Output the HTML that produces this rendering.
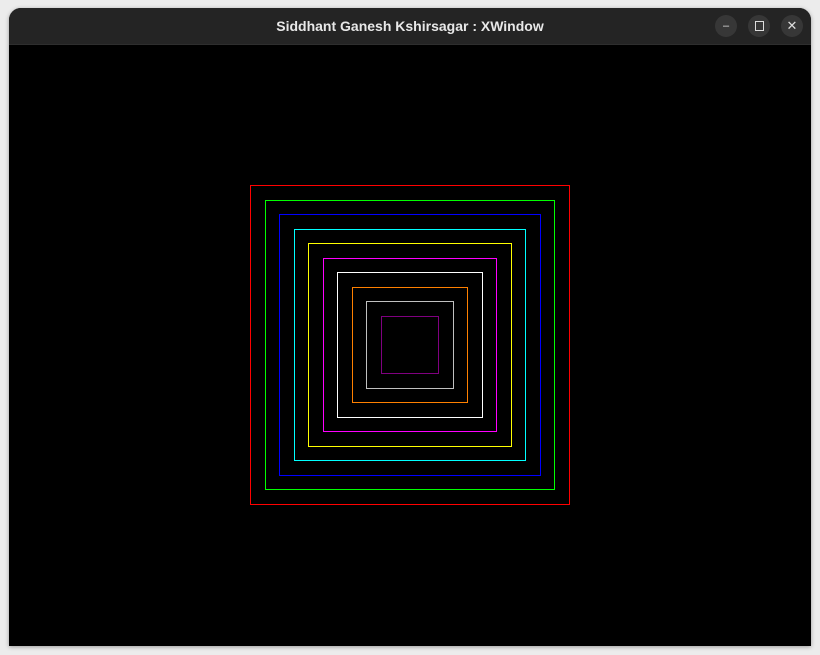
<!DOCTYPE html>
<html><head><style>
body{margin:0;width:820px;height:655px;background:#ececec;overflow:hidden;position:relative;font-family:"Liberation Sans",sans-serif}
.win{position:absolute;left:9px;top:8px;width:802px;height:638px;background:#000;border-radius:12px 12px 0 0;overflow:hidden;box-shadow:0 1px 4px rgba(0,0,0,.35)}
.tb{position:absolute;left:0;top:0;width:802px;height:36px;background:#242424;border-bottom:1px solid #2e2e2e}
.tt{position:absolute;left:0;right:0;top:10px;text-align:center;color:#e8e8e8;font-weight:bold;font-size:14px}
.b{position:absolute;top:7px;width:22px;height:22px;border-radius:11px;background:#373737;color:#ddd;font-size:11px;text-align:center;line-height:22px}
</style></head><body>
<div class="win">
<div class="tb"><div class="tt">Siddhant Ganesh Kshirsagar : XWindow</div>
<div class="b" style="left:706px">&#8211;</div>
<div class="b" style="left:739px"><div style="width:7px;height:8px;border:1px solid #ddd;margin:6px auto 0"></div></div>
<div class="b" style="left:772px;font-size:13px">✕</div>
</div>
</div>
<svg width="820" height="655" style="position:absolute;left:0;top:0" shape-rendering="crispEdges" fill="none">
<rect x="250.5" y="185.5" width="319" height="319" stroke="#ff0000"/>
<rect x="265.5" y="200.5" width="289" height="289" stroke="#00ff00"/>
<rect x="279.5" y="214.5" width="261" height="261" stroke="#0000ff"/>
<rect x="294.5" y="229.5" width="231" height="231" stroke="#00ffff"/>
<rect x="308.5" y="243.5" width="203" height="203" stroke="#ffff00"/>
<rect x="323.5" y="258.5" width="173" height="173" stroke="#ff00ff"/>
<rect x="337.5" y="272.5" width="145" height="145" stroke="#ffffff"/>
<rect x="352.5" y="287.5" width="115" height="115" stroke="#ff8000"/>
<rect x="366.5" y="301.5" width="87" height="87" stroke="#c0c0c0"/>
<rect x="381.5" y="316.5" width="57" height="57" stroke="#800080"/>
</svg>
</body></html>
